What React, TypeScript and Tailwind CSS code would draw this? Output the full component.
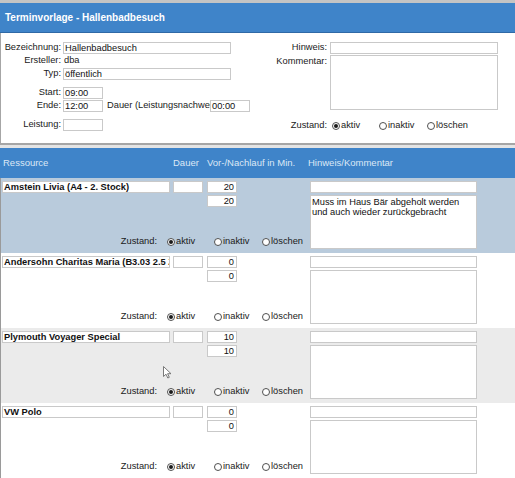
import React from "react";

type BoxProps = { className: string; children?: React.ReactNode };

function Box({ className, children }: BoxProps) {
  return (
    <div
      className={`h-[12px] shrink-0 bg-white border border-[#c9c9c9] leading-[10px] px-[1px] overflow-hidden whitespace-nowrap text-[#111] ${className}`}
    >
      {children}
    </div>
  );
}

function Radio({ checked, label, className }: { checked?: boolean; label: string; className: string }) {
  return (
    <span className={`flex items-center ${className}`}>
      <span className="w-[8px] h-[8px] rounded-full border border-[#505050] bg-white flex items-center justify-center">
        {checked && <span className="w-[4px] h-[4px] rounded-full bg-[#1a1a1a]" />}
      </span>
      <span className="ml-[1px]">{label}</span>
    </span>
  );
}

function Zustand({ labelClass, gapClass }: { labelClass: string; gapClass: string }) {
  return (
    <div className="flex items-center h-[12px]">
      <span className={`text-right ${labelClass}`}>Zustand:</span>
      <div className={`flex items-center ${gapClass}`}>
        <Radio checked label="aktiv" className="w-[47px]" />
        <Radio label="inaktiv" className="w-[48px]" />
        <Radio label="löschen" className="" />
      </div>
    </div>
  );
}

type Row = { name: string; vor: string; nach: string; comment?: string[]; bg: string };

const rows: Row[] = [
  {
    name: "Amstein Livia (A4 - 2. Stock)",
    vor: "20",
    nach: "20",
    comment: ["Muss im Haus Bär abgeholt werden", "und auch wieder zurückgebracht"],
    bg: "bg-[#b9cbdc]",
  },
  { name: "Andersohn Charitas Maria (B3.03 2.5 Zimmer)", vor: "0", nach: "0", bg: "bg-white" },
  { name: "Plymouth Voyager Special", vor: "10", nach: "10", bg: "bg-[#ebebeb]" },
  { name: "VW Polo", vor: "0", nach: "0", bg: "bg-white" },
];

function ResourceRow({ row }: { row: Row }) {
  return (
    <div className={`flex h-[75px] pt-[3px] border-l border-[#9a9a9a] ${row.bg}`}>
      <div className="w-[309px] flex flex-col pb-[5px]">
        <div className="flex items-center pl-[1px]">
          <Box className="w-[168px] font-bold">{row.name}</Box>
          <Box className="w-[30px] ml-[3px]" />
          <Box className="w-[30px] ml-[4px] text-right pr-[2px]">{row.vor}</Box>
        </div>
        <div className="flex mt-[2px] ml-[206px]">
          <Box className="w-[30px] text-right pr-[2px]">{row.nach}</Box>
        </div>
        <div className="mt-auto">
          <Zustand labelClass="w-[156px]" gapClass="ml-[10px]" />
        </div>
      </div>
      <div className="w-[167px] flex flex-col">
        <Box className="w-[167px]" />
        <div className="mt-[2px] h-[54px] bg-white border border-[#c9c9c9] px-[1px] pt-[1px] leading-[10px] text-[#111]">
          {row.comment?.map((l) => (
            <div key={l}>{l}</div>
          ))}
        </div>
      </div>
    </div>
  );
}

export default function App() {
  return (
    <div
      className="w-[515px] h-[478px] overflow-hidden bg-white text-[9.3px] text-[#1a1a1a] relative"
      style={{ fontFamily: '"Liberation Sans", Arial, sans-serif' }}
    >
      {/* top strip + title bar */}
      <div className="h-[3px] bg-[#c4c4c4]" />
      <div className="h-[30px] bg-[#3f84c9] border-b border-[#2f69a6] flex items-center pl-[5px]">
        <span className="text-white font-bold text-[10px]">Terminvorlage - Hallenbadbesuch</span>
      </div>

      {/* form */}
      <div className="flex border-l border-b-2 border-[#a6a6a6] pt-[9px] pb-[11px]">
        <div className="w-[269px] flex flex-col">
          <div className="flex items-center h-[12px]">
            <span className="w-[60px] text-right">Bezeichnung:</span>
            <Box className="w-[168px] ml-[2px]">Hallenbadbesuch</Box>
          </div>
          <div className="flex items-center h-[12px] mt-[1px]">
            <span className="w-[60px] text-right">Ersteller:</span>
            <span className="ml-[3px]">dba</span>
          </div>
          <div className="flex items-center h-[12px] mt-[1px]">
            <span className="w-[60px] text-right">Typ:</span>
            <Box className="w-[168px] ml-[2px]">öffentlich</Box>
          </div>
          <div className="flex items-center h-[12px] mt-[7px]">
            <span className="w-[60px] text-right">Start:</span>
            <Box className="w-[40px] ml-[2px]">09:00</Box>
          </div>
          <div className="flex items-center h-[12px] mt-[1px]">
            <span className="w-[60px] text-right">Ende:</span>
            <Box className="w-[40px] ml-[2px]">12:00</Box>
            <span className="w-[103px] ml-[4px] overflow-hidden whitespace-nowrap">Dauer (Leistungsnachweis):</span>
            <Box className="w-[40px]">00:00</Box>
          </div>
          <div className="flex items-center h-[12px] mt-[7px]">
            <span className="w-[60px] text-right">Leistung:</span>
            <Box className="w-[40px] ml-[2px]" />
          </div>
        </div>
        <div className="flex flex-col">
          <div className="flex items-center h-[12px]">
            <span className="w-[57px] text-right">Hinweis:</span>
            <Box className="w-[168px] ml-[3px]" />
          </div>
          <div className="flex mt-[1px]">
            <span className="w-[57px] text-right leading-[12px]">Kommentar:</span>
            <div className="w-[168px] h-[55px] ml-[3px] bg-white border border-[#c9c9c9]" />
          </div>
          <div className="mt-[10px]">
            <Zustand labelClass="w-[57px]" gapClass="ml-[5px]" />
          </div>
        </div>
      </div>
      <div className="h-[3px] bg-[#e4e4e4]" />

      {/* table header */}
      <div className="h-[30px] bg-[#3f84c9] flex items-center text-[#dce8f6] text-[9.5px]">
        <span className="w-[173px] pl-[3px]">Ressource</span>
        <span className="w-[34px]">Dauer</span>
        <span className="w-[101px]">Vor-/Nachlauf in Min.</span>
        <span>Hinweis/Kommentar</span>
      </div>

      {rows.map((r) => (
        <ResourceRow key={r.name} row={r} />
      ))}

      {/* mouse pointer */}
      <svg className="absolute left-[163px] top-[366px]" width="9" height="13" viewBox="0 0 9 13">
        <path d="M0.5 0.5 L0.5 10.5 L3 8.2 L4.8 12 L6.3 11.3 L4.6 7.7 L8 7.7 Z" fill="white" stroke="#6b6b6b" strokeWidth="0.9" strokeLinejoin="round" />
      </svg>
    </div>
  );
}
